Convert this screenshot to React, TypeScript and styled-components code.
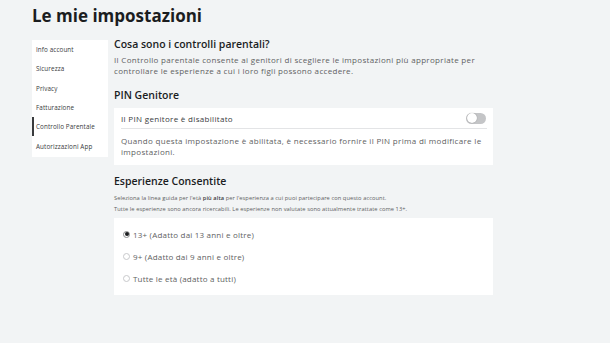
import React from "react";
import styled, { createGlobalStyle } from "styled-components";

const Global = createGlobalStyle`
  html, body { margin: 0; padding: 0; background: #f2f4f5; }
  body { font-family: "Open Sans", "Noto Sans", sans-serif; color: #393b3d; }
  * { box-sizing: border-box; }
`;

const Page = styled.div`
  width: 610px;
  height: 343px;
  padding: 6px 32px 0 32px;
  background: #f2f4f5;
`;

const Title = styled.h1`
  margin: 0;
  font-size: 17px;
  font-weight: 700;
  color: #1b1d1f;
  height: 31px;
  line-height: 20px;
`;

const Layout = styled.div`
  display: flex;
  align-items: flex-start;
  gap: 6px;
`;

const Sidebar = styled.nav`
  width: 76px;
  margin-top: 3px;
  background: #fff;
  display: flex;
  flex-direction: column;
  padding: 0 0 1px 0;
`;

const NavItem = styled.div<{ $active?: boolean }>`
  height: 19.3px;
  display: flex;
  align-items: center;
  padding-left: 2px;
  font-size: 6.3px;
  letter-spacing: 0.1px;
  color: #393b3d;
  border-left: 2px solid ${(p) => (p.$active ? "#393b3d" : "transparent")};
`;

const Main = styled.div`
  width: 379px;
  display: flex;
  flex-direction: column;
`;

const H2 = styled.h2<{ $mt?: number }>`
  margin: ${(p) => p.$mt ?? 0}px 0 0 0;
  font-size: 10.5px;
  font-weight: 600;
  color: #1b1d1f;
  line-height: 14px;
`;

const Para = styled.p`
  margin: 3px 0 0 0;
  font-size: 8px;
  letter-spacing: 0.32px;
  line-height: 11px;
  color: #606162;
`;

const Small = styled.p<{ $mt?: number }>`
  margin: ${(p) => p.$mt ?? 0}px 0 0 0;
  font-size: 5.7px;
  letter-spacing: 0.08px;
  line-height: 11px;
  color: #606162;
  b { font-weight: 600; color: #393b3d; }
`;

const Card = styled.div<{ $mt?: number }>`
  margin-top: ${(p) => p.$mt ?? 0}px;
  background: #fff;
  display: flex;
  flex-direction: column;
`;

const ToggleRow = styled.div`
  display: flex;
  align-items: center;
  justify-content: space-between;
  height: 21px;
  margin: 0 6px 0 7px;
  border-bottom: 1px solid #e3e4e6;
  font-size: 8px;
  letter-spacing: 0.32px;
  color: #393b3d;
`;

const Toggle = styled.div`
  width: 20px;
  height: 11px;
  border-radius: 6px;
  background: #c4c5c7;
  position: relative;
  margin-right: 1px;
  &::after {
    content: "";
    position: absolute;
    left: 0.5px;
    top: 0.5px;
    width: 10px;
    height: 10px;
    border-radius: 50%;
    background: #fff;
    box-shadow: 0 0 1px rgba(0,0,0,0.4);
  }
`;

const CardText = styled.p`
  margin: 0;
  padding: 6px 8px 8px 7px;
  font-size: 8px;
  letter-spacing: 0.32px;
  line-height: 11px;
  color: #606162;
`;

const RadioList = styled.div`
  display: flex;
  flex-direction: column;
  padding: 5px 9px 6px 9px;
`;

const RadioRow = styled.label`
  display: flex;
  align-items: center;
  gap: 3px;
  height: 22px;
  font-size: 8px;
  letter-spacing: 0.2px;
  color: #606162;
`;

const Dot = styled.span<{ $on?: boolean }>`
  width: 7px;
  height: 7px;
  border-radius: 50%;
  border: 1px solid ${(p) => (p.$on ? "#8a8b8c" : "#c8c9cb")};
  background: #fff;
  display: flex;
  align-items: center;
  justify-content: center;
  &::after {
    content: "";
    width: 4px;
    height: 4px;
    border-radius: 50%;
    background: ${(p) => (p.$on ? "#1b1d1f" : "transparent")};
  }
`;

const navItems = [
  "Info account",
  "Sicurezza",
  "Privacy",
  "Fatturazione",
  "Controllo Parentale",
  "Autorizzazioni App",
];

const radios = [
  { label: "13+ (Adatto dai 13 anni e oltre)", on: true },
  { label: "9+ (Adatto dai 9 anni e oltre)", on: false },
  { label: "Tutte le età (adatto a tutti)", on: false },
];

export default function App() {
  return (
    <>
      <Global />
      <Page>
        <Title>Le mie impostazioni</Title>
        <Layout>
          <Sidebar>
            {navItems.map((n) => (
              <NavItem key={n} $active={n === "Controllo Parentale"}>
                {n}
              </NavItem>
            ))}
          </Sidebar>
          <Main>
            <H2>Cosa sono i controlli parentali?</H2>
            <Para>
              Il Controllo parentale consente ai genitori di scegliere le impostazioni più
              appropriate per controllare le esperienze a cui i loro figli possono accedere.
            </Para>
            <H2 $mt={12}>PIN Genitore</H2>
            <Card $mt={6}>
              <ToggleRow>
                <span>Il PIN genitore è disabilitato</span>
                <Toggle />
              </ToggleRow>
              <CardText>
                Quando questa impostazione è abilitata, è necessario fornire il PIN prima di
                modificare le impostazioni.
              </CardText>
            </Card>
            <H2 $mt={9}>Esperienze Consentite</H2>
            <Small $mt={5}>
              Seleziona la linea guida per l'età <b>più alta</b> per l'esperienza a cui puoi
              partecipare con questo account.
            </Small>
            <Small>
              Tutte le esperienze sono ancora ricercabili. Le esperienze non valutate sono
              attualmente trattate come 13+.
            </Small>
            <Card $mt={3}>
              <RadioList>
                {radios.map((r) => (
                  <RadioRow key={r.label}>
                    <Dot $on={r.on} />
                    {r.label}
                  </RadioRow>
                ))}
              </RadioList>
            </Card>
          </Main>
        </Layout>
      </Page>
    </>
  );
}
